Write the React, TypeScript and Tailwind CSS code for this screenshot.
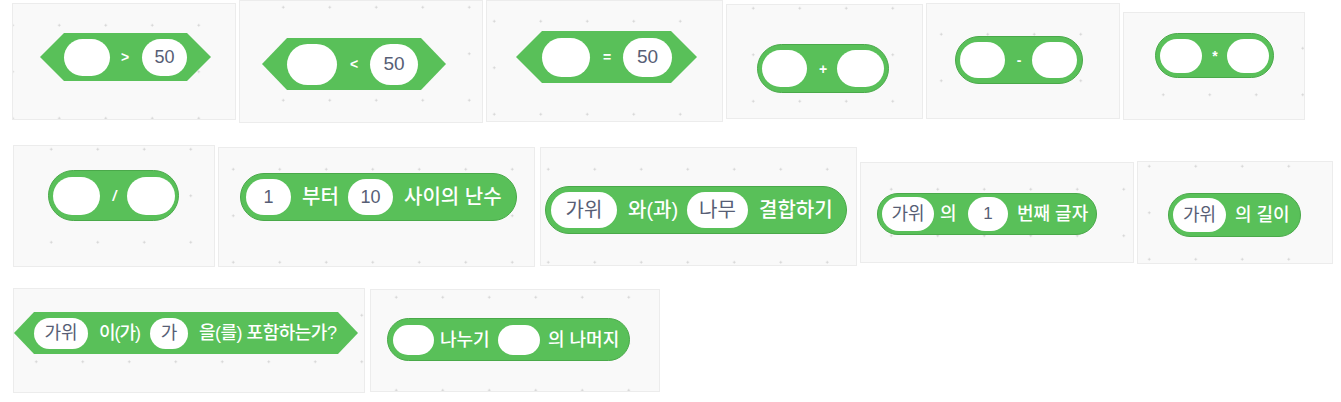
import React from "react";

const F = "font-['Liberation_Sans','Noto_Sans_CJK_KR',sans-serif]";
const CARD =
  "flex items-start shrink-0 bg-[#f9f9f9] border border-[#ececec] bg-[radial-gradient(circle,#d2d2d2_0.8px,transparent_1.4px)] bg-[size:46.5px_46.5px]";
const REP = "flex items-center shrink-0 rounded-full bg-[#59c059] border border-[#4aa94a]";
const HEX = "flex items-center shrink-0 bg-[#59c059]";
const IN = "flex items-center justify-center shrink-0 rounded-full bg-white text-[#575e75] whitespace-nowrap";
const LBL = "text-white whitespace-nowrap leading-none shrink-0 font-medium";
const OP = "text-white font-bold text-[14px] leading-none text-center shrink-0";

function Card({ className, children }: { className: string; children: React.ReactNode }) {
  return <div className={`${CARD} ${className}`}>{children}</div>;
}

export default function App() {
  return (
    <div className={`w-[1341px] h-[402px] bg-white overflow-hidden ${F}`}>
      {/* Row 1 */}
      <div className="flex items-start pl-[12px]">
        <Card className="w-[224px] h-[117px] mt-[3px] bg-[position:23px_-2px]">
          <div className={`${HEX} ml-[27px] mt-[29px] w-[171px] h-[48px] pl-[24px] [clip-path:polygon(0_50%,24px_0,calc(100%_-_24px)_0,100%_50%,calc(100%_-_24px)_100%,24px_100%)]`}>
            <div className={`${IN} w-[46px] h-[37px]`} />
            <span className={`${OP} ml-[10px] w-[10px]`}>&gt;</span>
            <div className={`${IN} ml-[12px] w-[45px] h-[37px] text-[18px]`}>50</div>
          </div>
        </Card>
        <Card className="ml-[3px] w-[244px] h-[123px] bg-[position:20px_-17px]">
          <div className={`${HEX} ml-[22px] mt-[37px] w-[184px] h-[52px] pl-[25px] [clip-path:polygon(0_50%,25px_0,calc(100%_-_25px)_0,100%_50%,calc(100%_-_25px)_100%,25px_100%)]`}>
            <div className={`${IN} w-[50px] h-[41px]`} />
            <span className={`${OP} ml-[11px] w-[12px]`}>&lt;</span>
            <div className={`${IN} ml-[10px] w-[48px] h-[41px] text-[19px]`}>50</div>
          </div>
        </Card>
        <Card className="ml-[3px] w-[237px] h-[122px] bg-[position:-16px_-3px]">
          <div className={`${HEX} ml-[29px] mt-[30px] w-[181px] h-[52px] pl-[26px] [clip-path:polygon(0_50%,26px_0,calc(100%_-_26px)_0,100%_50%,calc(100%_-_26px)_100%,26px_100%)]`}>
            <div className={`${IN} w-[48px] h-[39px]`} />
            <span className={`${OP} ml-[11px] w-[12px]`}>=</span>
            <div className={`${IN} ml-[10px] w-[49px] h-[39px] text-[19px]`}>50</div>
          </div>
        </Card>
        <Card className="ml-[3px] w-[197px] h-[115px] mt-[4px] bg-[position:3px_-20px]">
          <div className={`${REP} ml-[30px] mt-[39px] w-[132px] h-[49px] pl-[4px]`}>
            <div className={`${IN} w-[45px] h-[37px]`} />
            <span className={`${OP} ml-[12px] w-[8px]`}>+</span>
            <div className={`${IN} ml-[10px] w-[47px] h-[37px]`} />
          </div>
        </Card>
        <Card className="ml-[3px] w-[194px] h-[116px] mt-[3px] bg-[position:-9px_7px]">
          <div className={`${REP} ml-[28px] mt-[32px] w-[128px] h-[48px] pl-[4px]`}>
            <div className={`${IN} w-[45px] h-[36px]`} />
            <span className={`${OP} ml-[11px] w-[6px]`}>-</span>
            <div className={`${IN} ml-[10px] w-[45px] h-[36px]`} />
          </div>
        </Card>
        <Card className="ml-[3px] w-[182px] h-[108px] mt-[12px] bg-[position:16px_12px]">
          <div className={`${REP} ml-[31px] mt-[20px] w-[119px] h-[45px] pl-[4px]`}>
            <div className={`${IN} w-[42px] h-[34px]`} />
            <span className={`${OP} ml-[10px] w-[6px]`}>*</span>
            <div className={`${IN} ml-[9px] w-[42px] h-[34px]`} />
          </div>
        </Card>
      </div>

      {/* Row 2 */}
      <div className="flex items-start pl-[13px] mt-[22px]">
        <Card className="w-[202px] h-[122px] bg-[position:14px_-20px]">
          <div className={`${REP} ml-[34px] mt-[24px] w-[131px] h-[51px] pl-[4px]`}>
            <div className={`${IN} w-[47px] h-[38px]`} />
            <span className={`${OP} ml-[12px] w-[5px] italic`}>/</span>
            <div className={`${IN} ml-[10px] w-[48px] h-[38px]`} />
          </div>
        </Card>
        <Card className="ml-[3px] w-[317px] h-[120px] mt-[2px] bg-[position:-9px_-2px]">
          <div className={`${REP} ml-[21px] mt-[25px] w-[277px] h-[48px] pl-[5px] text-[20px]`}>
            <div className={`${IN} w-[45px] h-[36px] text-[18px]`}>1</div>
            <span className={`${LBL} ml-[11px] w-[36px]`}>부터</span>
            <div className={`${IN} ml-[10px] w-[45px] h-[36px] text-[18px]`}>10</div>
            <span className={`${LBL} ml-[11px] w-[99px]`}>사이의 난수</span>
          </div>
        </Card>
        <Card className="ml-[5px] w-[317px] h-[119px] mt-[2px] bg-[position:-16px_-2px]">
          <div className={`${REP} ml-[4px] mt-[38px] w-[302px] h-[48px] pl-[5px] text-[20px]`}>
            <div className={`${IN} w-[66px] h-[36px]`}>가위</div>
            <span className={`${LBL} ml-[11px] w-[49px]`}>와(과)</span>
            <div className={`${IN} ml-[10px] w-[61px] h-[36px]`}>나무</div>
            <span className={`${LBL} ml-[11px] w-[71px]`}>결합하기</span>
          </div>
        </Card>
        <Card className="ml-[3px] w-[274px] h-[101px] mt-[17px] bg-[position:7px_3px]">
          <div className={`${REP} ml-[16px] mt-[30px] w-[220px] h-[42px] pl-[4px] text-[18px]`}>
            <div className={`${IN} w-[52px] h-[34px]`}>가위</div>
            <span className={`${LBL} ml-[6px] w-[18px]`}>의</span>
            <div className={`${IN} ml-[10px] w-[40px] h-[34px] text-[17px]`}>1</div>
            <span className={`${LBL} ml-[9px] w-[70px]`}>번째 글자</span>
          </div>
        </Card>
        <Card className="ml-[3px] w-[196px] h-[103px] mt-[16px] bg-[position:-12px_-19px]">
          <div className={`${REP} ml-[30px] mt-[31px] w-[133px] h-[44px] pl-[4px] text-[18px]`}>
            <div className={`${IN} w-[53px] h-[34px]`}>가위</div>
            <span className={`${LBL} ml-[9px] w-[52px]`}>의 길이</span>
          </div>
        </Card>
      </div>

      {/* Row 3 */}
      <div className="flex items-start pl-[13px] mt-[21px]">
        <Card className="w-[352px] h-[105px] bg-[position:-1px_3px]">
          <div className={`${HEX} ml-0 mt-[23px] w-[344px] h-[42px] pl-[20px] text-[18px] [clip-path:polygon(0_50%,20px_0,calc(100%_-_20px)_0,100%_50%,calc(100%_-_20px)_100%,20px_100%)]`}>
            <div className={`${IN} w-[54px] h-[31px]`}>가위</div>
            <span className={`${LBL} ml-[11px] w-[40px] tracking-[-1px]`}>이(가)</span>
            <div className={`${IN} ml-[11px] w-[38px] h-[31px]`}>가</div>
            <span className={`${LBL} ml-[11px] w-[135px] tracking-[-0.5px]`}>을(를) 포함하는가?</span>
          </div>
        </Card>
        <Card className="ml-[5px] w-[290px] h-[103px] mt-[1px] bg-[position:2px_-16px]">
          <div className={`${REP} ml-[16px] mt-[28px] w-[243px] h-[43px] pl-[5px] text-[18px]`}>
            <div className={`${IN} w-[41px] h-[30px]`} />
            <span className={`${LBL} ml-[6px] w-[48px]`}>나누기</span>
            <div className={`${IN} ml-[10px] w-[42px] h-[30px]`} />
            <span className={`${LBL} ml-[8px] w-[70px]`}>의 나머지</span>
          </div>
        </Card>
      </div>
    </div>
  );
}
